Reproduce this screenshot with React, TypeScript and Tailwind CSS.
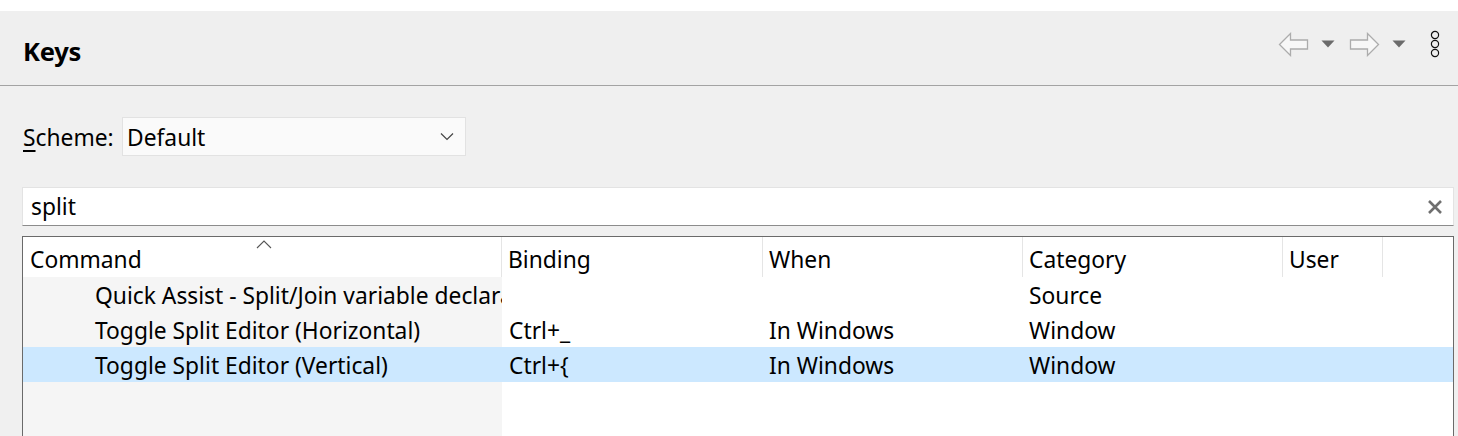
const font = { fontFamily: '"Noto Sans", "Open Sans", sans-serif' }

type Row = { command: string; binding: string; when: string; category: string; selected?: boolean }

const rows: Row[] = [
  { command: 'Quick Assist - Split/Join variable declaration', binding: '', when: '', category: 'Source' },
  { command: 'Toggle Split Editor (Horizontal)', binding: 'Ctrl+_', when: 'In Windows', category: 'Window' },
  { command: 'Toggle Split Editor (Vertical)', binding: 'Ctrl+{', when: 'In Windows', category: 'Window', selected: true },
]

function NavArrow({ dir }: { dir: 'left' | 'right' }) {
  return (
    <svg width="31" height="25" viewBox="0 0 31 25" className={dir === 'right' ? '-scale-x-100' : ''}>
      <path d="M1.5 12.5 L12.5 1.5 L12.5 8 L29.5 8 L29.5 17 L12.5 17 L12.5 23.5 Z" fill="#f7f7f7" stroke="#acacac" strokeWidth="1.3" strokeLinejoin="miter" />
    </svg>
  )
}

function DropTri() {
  return (
    <svg width="14" height="8" viewBox="0 0 14 8">
      <path d="M0.5 0.5 L13.5 0.5 L7 7.5 Z" fill="#6b6b6b" />
    </svg>
  )
}

export default function App() {
  return (
    <div className="w-[1458px] h-[436px] overflow-hidden bg-[#f0f0f0] flex flex-col text-black" style={font}>
      <div className="h-[11px] bg-white" />
      <div className="h-[75px] bg-[#efefef] border-b border-[#a3a3a3] flex items-center pl-[23px] pr-[16px]">
        <h1 className="text-[25.5px] font-bold tracking-[-0.2px] mt-[6px]">Keys</h1>
        <div className="ml-auto flex items-center -mt-[8px]">
          <NavArrow dir="left" />
          <div className="ml-[12px]"><DropTri /></div>
          <div className="ml-[14px]"><NavArrow dir="right" /></div>
          <div className="ml-[12px]"><DropTri /></div>
          <svg width="14" height="28" viewBox="0 0 14 28" className="ml-[22px]">
            <circle cx="7" cy="5" r="3.6" fill="none" stroke="#111" strokeWidth="1.2" />
            <circle cx="7" cy="14" r="3.6" fill="none" stroke="#111" strokeWidth="1.2" />
            <circle cx="7" cy="23" r="3.6" fill="none" stroke="#111" strokeWidth="1.2" />
          </svg>
        </div>
      </div>

      <div className="flex-1 flex flex-col pl-[22px] pr-[4px]">
        <div className="mt-[31px] flex items-center">
          <span className="text-[22.8px] w-[100px] pl-[1px] mt-[4px]">
            <span className="underline underline-offset-[4px]">S</span>cheme:
          </span>
          <div className="h-[39px] w-[344px] bg-[#fafafa] border border-[#e2e2e2] flex items-center pl-[4px] pr-[11px]">
            <span className="text-[22.8px] mt-[4px]">Default</span>
            <svg width="14" height="9" viewBox="0 0 14 9" className="ml-auto">
              <path d="M1 1.5 L7 7.5 L13 1.5" fill="none" stroke="#444" strokeWidth="1.2" />
            </svg>
          </div>
        </div>

        <div className="mt-[31px] h-[39px] bg-white border border-[#e3e3e3] border-b-[#8c8c8c] flex items-center pl-[8px] pr-[10px]">
          <span className="text-[22.8px] mt-[1px]">split</span>
          <svg width="16" height="16" viewBox="0 0 16 16" className="ml-auto">
            <path d="M2 2 L14 14 M14 2 L2 14" stroke="#6f6f6f" strokeWidth="2.6" />
          </svg>
        </div>

        <div className="mt-[10px] flex-1 border-[1.5px] border-b-0 border-[#6a6a6a] bg-white flex flex-col relative">
          <div className="absolute left-0 top-0 bottom-0 w-[479px] bg-[#f5f5f5]" />
          <div className="relative h-[40px] bg-white flex text-[22.8px]">
            <div className="w-[479px] border-r border-[#e5e5e5] pl-[7px] flex items-end relative">
              Command
              <svg width="16" height="9" viewBox="0 0 16 9" className="absolute left-[233px] top-[3px]">
                <path d="M1 8 L8 1 L15 8" fill="none" stroke="#555" strokeWidth="1.1" />
              </svg>
            </div>
            <div className="w-[261px] border-r border-[#e5e5e5] pl-[6px] flex items-end">Binding</div>
            <div className="w-[260px] border-r border-[#e5e5e5] pl-[6px] flex items-end">When</div>
            <div className="w-[260px] border-r border-[#e5e5e5] pl-[6px] flex items-end">Category</div>
            <div className="w-[100px] border-r border-[#e5e5e5] pl-[6px] flex items-end">User</div>
          </div>
          {rows.map((r, i) => (
            <div
              key={i}
              className={`relative h-[35px] flex items-center text-[22.8px] whitespace-nowrap ${r.selected ? 'bg-[#cce8ff]' : ''}`}
            >
              <div className="w-[479px] pl-[72px] overflow-hidden mt-[4px]">{r.command}</div>
              <div className="w-[261px] pl-[7px] mt-[4px]">{r.binding}</div>
              <div className="w-[260px] pl-[6px] mt-[4px]">{r.when}</div>
              <div className="w-[260px] pl-[6px] mt-[4px]">{r.category}</div>
              <div className="w-[100px]" />
            </div>
          ))}
        </div>
      </div>
    </div>
  )
}
